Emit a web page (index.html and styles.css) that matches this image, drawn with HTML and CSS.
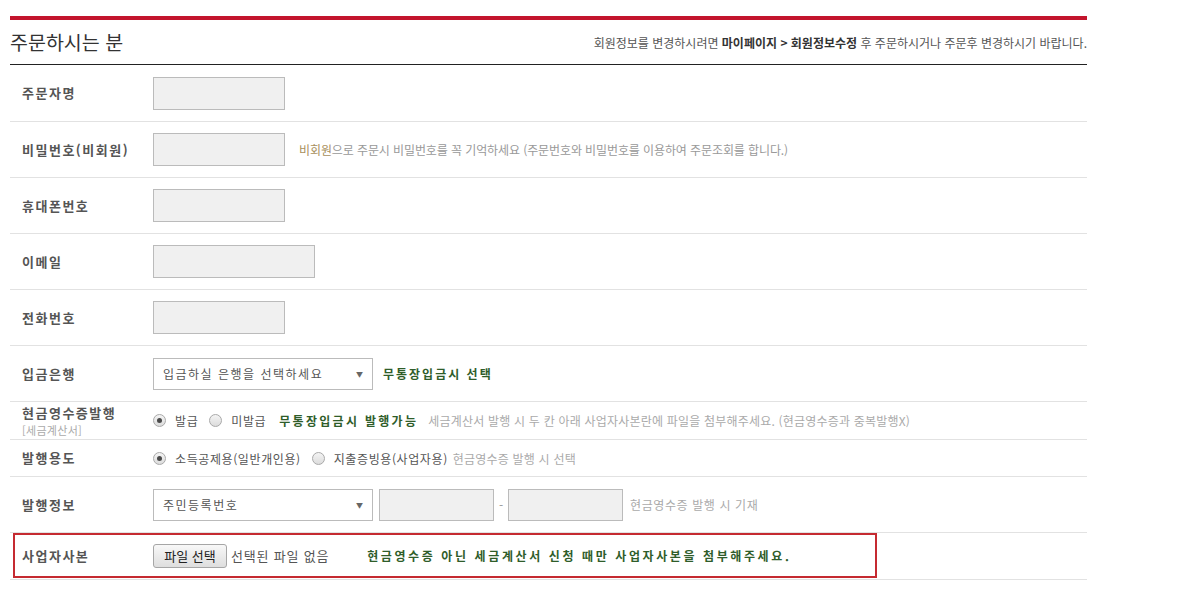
FILE: index.html
```html
<!DOCTYPE html>
<html lang="ko">
<head>
<meta charset="utf-8">
<title>주문하시는 분</title>
<link rel="stylesheet" href="styles.css">
</head>
<body>
<div class="wrap">
  <div class="head">
    <h2 class="title">주문하시는 분</h2>
    <p class="head-note">회원정보를 변경하시려면 <b>마이페이지 &gt; 회원정보수정</b> 후 주문하시거나 주문후 변경하시기 바랍니다.</p>
  </div>
  <div class="form">
    <div class="row row-first">
      <div class="label">주문자명</div>
      <div class="field"><span class="input w132"></span></div>
    </div>
    <div class="row">
      <div class="label">비밀번호(비회원)</div>
      <div class="field"><span class="input w132"></span><span class="help"><em class="tan">비회원</em>으로 주문시 비밀번호를 꼭 기억하세요 (주문번호와 비밀번호를 이용하여 주문조회를 합니다.)</span></div>
    </div>
    <div class="row">
      <div class="label">휴대폰번호</div>
      <div class="field"><span class="input w132"></span></div>
    </div>
    <div class="row">
      <div class="label">이메일</div>
      <div class="field"><span class="input w162"></span></div>
    </div>
    <div class="row">
      <div class="label">전화번호</div>
      <div class="field"><span class="input w132"></span></div>
    </div>
    <div class="row">
      <div class="label">입금은행</div>
      <div class="field"><div class="select"><span>입금하실 은행을 선택하세요</span><span class="arrow">▼</span></div><span class="green g-bank">무통장입금시 선택</span></div>
    </div>
    <div class="row row-short">
      <div class="label two"><span class="main">현금영수증발행</span><span class="sub">[세금계산서]</span></div>
      <div class="field">
        <span class="radio"><i class="dot on"></i>발급</span>
        <span class="radio"><i class="dot"></i>미발급</span>
        <span class="green g-issue">무통장입금시 발행가능</span>
        <span class="gray">세금계산서 발행 시 두 칸 아래 사업자사본란에 파일을 첨부해주세요. (현금영수증과 중복발행X)</span>
      </div>
    </div>
    <div class="row row-short2">
      <div class="label">발행용도</div>
      <div class="field">
        <span class="radio"><i class="dot on"></i>소득공제용(일반개인용)</span>
        <span class="radio"><i class="dot"></i>지출증빙용(사업자용)</span>
        <span class="gray g-use">현금영수증 발행 시 선택</span>
      </div>
    </div>
    <div class="row">
      <div class="label">발행정보</div>
      <div class="field"><div class="select"><span>주민등록번호</span><span class="arrow">▼</span></div><span class="input w115 ml6"></span><span class="dash">-</span><span class="input w115"></span><span class="gray g-note">현금영수증 발행 시 기재</span></div>
    </div>
    <div class="row row-file">
      <div class="redbox">
        <div class="label">사업자사본</div>
        <div class="field"><button class="filebtn" type="button">파일 선택</button><span class="nofile">선택된 파일 없음</span><span class="green g-file">현금영수증 아닌 세금계산서 신청 때만 사업자사본을 첨부해주세요.</span></div>
      </div>
    </div>
  </div>
</div>
</body>
</html>
```
FILE: styles.css
```css
* { box-sizing: border-box; }
body {
  margin: 0;
  background: #fff;
  font-family: "Noto Sans CJK KR", "Noto Sans", sans-serif;
  color: #555;
  font-size: 12px;
}
.wrap {
  margin-left: 10px;
  width: 1077px;
}
.head {
  margin-top: 16px;
  border-top: 4px solid #c3152d;
  border-bottom: 1px solid #222;
  height: 49px;
  display: flex;
  align-items: center;
  justify-content: space-between;
}
.title {
  margin: 0;
  font-size: 19.5px;
  font-weight: normal;
  color: #333;
  letter-spacing: 0;
  line-height: 24px;
}
.head-note {
  margin: 0;
  font-size: 12px;
  letter-spacing: 0;
  color: #555;
}
.head-note b { color: #333; }
.row {
  display: flex;
  align-items: center;
  height: 56px;
  border-bottom: 1px solid #e2e2e2;
}
.row-first { height: 57px; }
.row-short { height: 38px; }
.row-short2 { height: 37px; }
.row-file { height: 47px; align-items: flex-start; }
.label {
  width: 143px;
  flex: none;
  padding-left: 12px;
  font-weight: bold;
  font-size: 13px;
  letter-spacing: 1.5px;
  color: #555;
  line-height: 16px;
}
.label.two { display: flex; flex-direction: column; }
.label .main { display: block; line-height: 18px; height: 18px; }
.label .sub { display: block; font-weight: normal; font-size: 11px; letter-spacing: 0.3px; color: #aaa; line-height: 16px; height: 16px; }
.field { display: flex; align-items: center; }
.input {
  display: inline-block;
  height: 33px;
  background: #f0f0f0;
  border: 1px solid #bbb;
}
.w132 { width: 132px; }
.w162 { width: 162px; }
.w115 { width: 115px; height: 32px; }
.ml6 { margin-left: 6px; }
.dash { width: 14px; text-align: center; color: #999; }
.help {
  margin-left: 14px;
  color: #999;
  letter-spacing: -0.1px;
}
.tan { font-style: normal; color: #a88f5c; }
.select {
  width: 220px;
  height: 32px;
  border: 1px solid #bbb;
  background: #fff;
  display: flex;
  align-items: center;
  justify-content: space-between;
  padding: 0 9px 0 9px;
  color: #555;
  letter-spacing: 1.5px;
}
.arrow { font-size: 7px; color: #666; letter-spacing: 0; }
.green {
  color: #2f5d2a;
  font-weight: bold;
  letter-spacing: 2px;
}
.g-bank { margin-left: 10px; }
.g-issue { margin-left: 2px; margin-right: 10px; letter-spacing: 2.3px; }
.gray { color: #aaa; letter-spacing: 0.2px; }
.radio {
  display: inline-flex;
  align-items: center;
  margin-right: 11px;
  color: #555;
  letter-spacing: 0.6px;
}
.dot {
  width: 13px;
  height: 13px;
  border-radius: 50%;
  border: 1px solid #a9a9a9;
  background: linear-gradient(#f4f4f4, #dcdcdc);
  margin-right: 9px;
  position: relative;
}
.dot.on::after {
  content: "";
  position: absolute;
  left: 3px;
  top: 3px;
  width: 5px;
  height: 5px;
  border-radius: 50%;
  background: #4a4a4a;
}
.g-use { margin-left: -6px; }
.g-note { margin-left: 7px; letter-spacing: 0.6px; }
.redbox {
  margin-left: 3px;
  width: 864px;
  height: 45px;
  border: 2px solid #c52a31;
  display: flex;
  align-items: center;
}
.redbox .label { width: 138px; padding-left: 7px; }
.filebtn {
  width: 74px;
  height: 24px;
  font-family: inherit;
  font-size: 13px;
  color: #222;
  padding: 0;
  border: 1px solid #a6a6a6;
  border-radius: 3px;
  background: linear-gradient(#f8f8f8, #dedede);
}
.nofile { margin-left: 4px; font-size: 13px; color: #555; letter-spacing: 0.8px; }
.g-file { margin-left: 38px; letter-spacing: 2.6px; }
```
